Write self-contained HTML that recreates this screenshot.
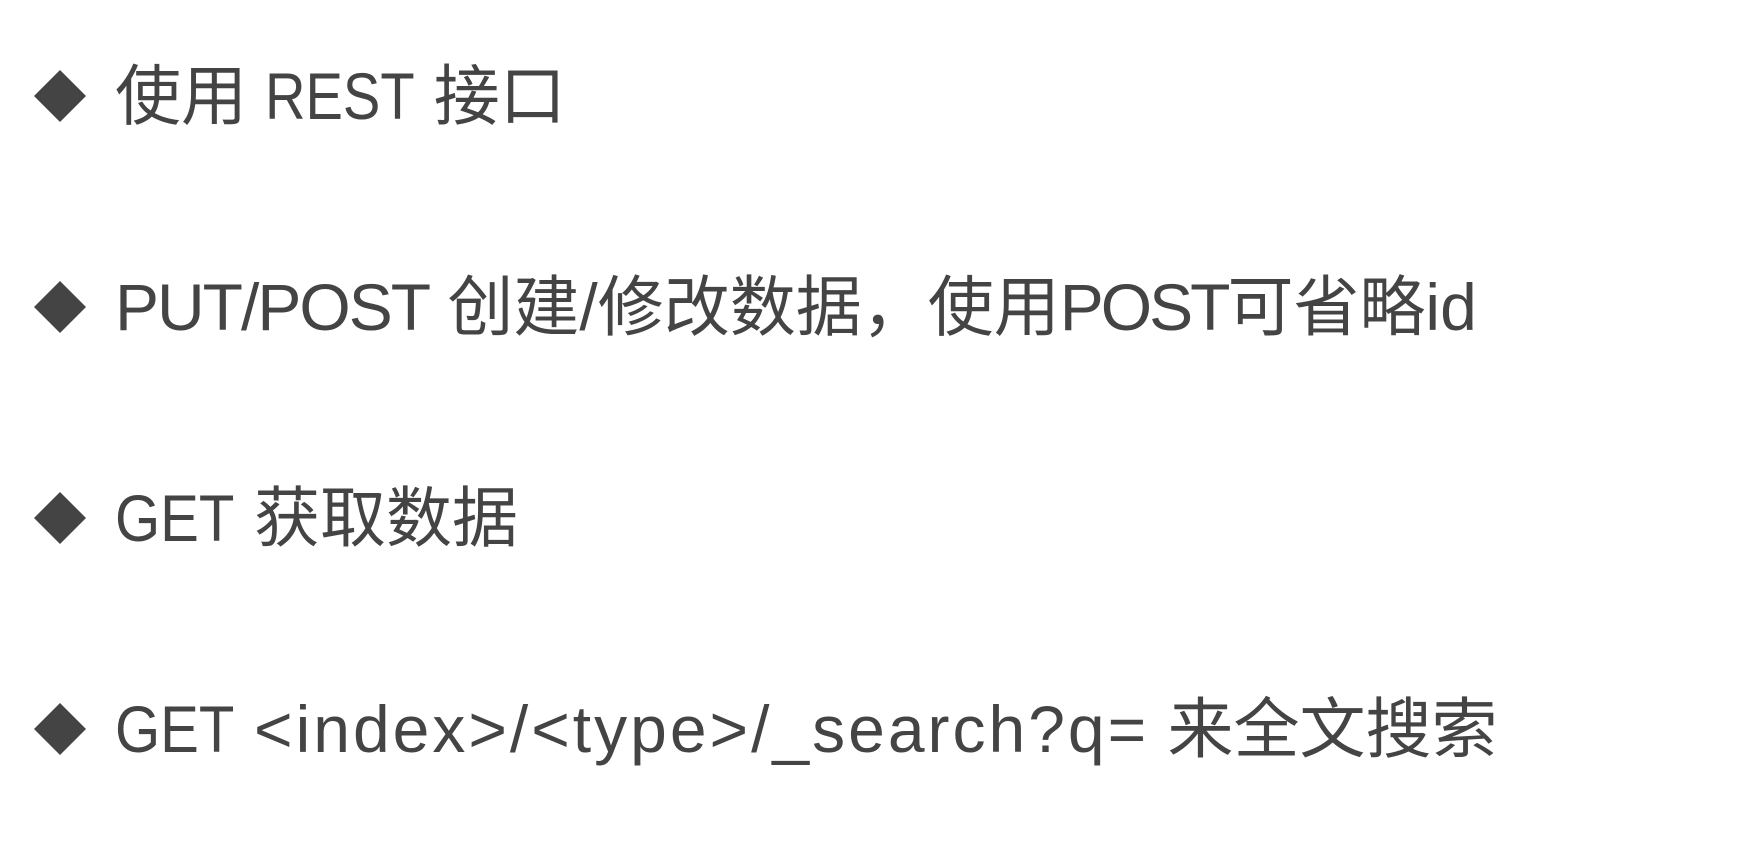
<!DOCTYPE html>
<html><head><meta charset="utf-8"><style>
html,body{margin:0;padding:0;background:#fff;width:1742px;height:844px;overflow:hidden}
.row{position:absolute;left:0;height:80px;width:1742px}
.d{position:absolute;left:34px;top:14px}
.t{position:absolute;left:115px;top:0;line-height:80px;font-size:66px;color:#444;font-family:"Liberation Sans","Noto Sans CJK SC",sans-serif;white-space:nowrap}
.c{display:inline-block;transform:scaleX(.85);transform-origin:left;margin-right:-26px}
.g{display:inline-block;transform:scaleX(.88);transform-origin:left;margin-right:-15px}
.p{letter-spacing:-2px}
.q{letter-spacing:-3px}
.w{letter-spacing:3px}
</style></head><body>
<div class="row" style="top:56px"><svg class="d" width="52" height="52"><polygon points="26,0 52,26 26,52 0,26" fill="#444"/></svg><div class="t">使用 <span class="c">REST</span> 接口</div></div>
<div class="row" style="top:267px"><svg class="d" width="52" height="52"><polygon points="26,0 52,26 26,52 0,26" fill="#444"/></svg><div class="t"><span class="p">PUT/POST</span> 创建/修改数据，使用<span class="q">POST</span>可省略id</div></div>
<div class="row" style="top:478px"><svg class="d" width="52" height="52"><polygon points="26,0 52,26 26,52 0,26" fill="#444"/></svg><div class="t"><span class="g">GET</span> 获取数据</div></div>
<div class="row" style="top:689px"><svg class="d" width="52" height="52"><polygon points="26,0 52,26 26,52 0,26" fill="#444"/></svg><div class="t"><span class="g">GET</span> <span class="w">&lt;index&gt;/&lt;type&gt;/_search?q=</span> 来全文搜索</div></div>
</body></html>
